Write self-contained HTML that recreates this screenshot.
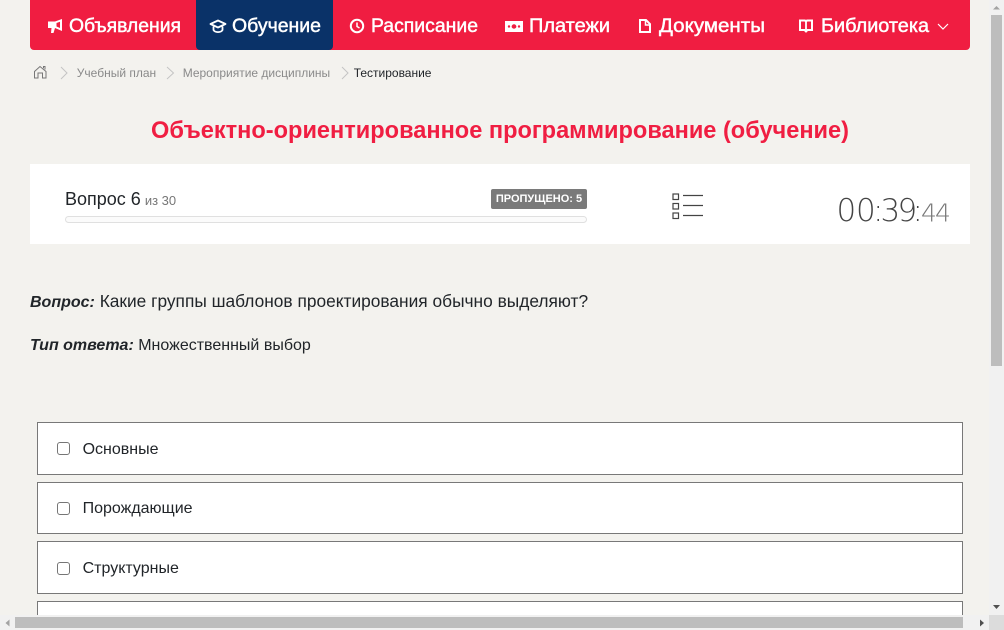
<!DOCTYPE html>
<html lang="ru"><head><meta charset="utf-8"><title>Тестирование</title>
<style>
html,body{margin:0;padding:0;width:1004px;height:630px;overflow:hidden;background:#f3f2ee}
#p{position:relative;width:1004px;height:630px;overflow:hidden;background:#f3f2ee;font-family:"Liberation Sans",sans-serif;color:#212529}
.a{position:absolute;white-space:nowrap}
svg{position:absolute;overflow:visible}
.opt{position:absolute;left:37px;width:924px;background:#fff;border:1px solid #787878}
.opt i{position:absolute;left:19px;width:11px;height:11px;border:1px solid #767676;border-radius:3px;background:#fff}
.opt span{position:absolute;left:44.600px;font-size:16px;line-height:20px;white-space:nowrap}
</style></head><body><div id="p">
<div class="a" style="left:30px;top:0;width:940px;height:50px;background:#f01d41;border-radius:0 0 4px 4px"></div>
<div class="a" style="left:196px;top:0;width:137px;height:50px;background:#0a3268;border-radius:0 0 4px 4px"></div>

<svg style="left:0;top:0" width="1004" height="160">
<g font-family="Liberation Sans" font-size="19.500" fill="#fff" stroke="#fff" stroke-width="0.450">
<text x="69" y="32" textLength="112" lengthAdjust="spacingAndGlyphs">Объявления</text>
<text x="232" y="32" textLength="89" lengthAdjust="spacingAndGlyphs">Обучение</text>
<text x="371" y="32" textLength="107" lengthAdjust="spacingAndGlyphs">Расписание</text>
<text x="529" y="32" textLength="81" lengthAdjust="spacingAndGlyphs">Платежи</text>
<text x="659" y="32" textLength="106" lengthAdjust="spacingAndGlyphs">Документы</text>
<text x="821" y="32" textLength="108" lengthAdjust="spacingAndGlyphs">Библиотека</text>
</g>
<text x="151" y="138" font-family="Liberation Sans" font-weight="bold" font-size="24" fill="#f01e42" textLength="698" lengthAdjust="spacingAndGlyphs">Объектно-ориентированное программирование (обучение)</text>
<!-- megaphone -->
<path d="M48 21.500 L55 21.500 L62 19 V31 L55 28 L53.500 33 H51 L51.500 28 H48 Z" fill="#fff"/>
<path d="M56.500 23 L60 21.800 V28 L56.500 26.500 Z" fill="#f01d41"/>
<!-- graduation cap -->
<path d="M210.500 24 L218 20.500 L225.500 24 L218 27.500 Z" fill="none" stroke="#fff" stroke-width="1.800" stroke-linejoin="round"/>
<path d="M213.500 26.500 V30 C215 32.800 221 32.800 222.500 30 V26.500" fill="none" stroke="#fff" stroke-width="1.800"/>
<!-- clock -->
<circle cx="357" cy="26" r="6.200" fill="none" stroke="#fff" stroke-width="2"/>
<path d="M357 22.500 V26.500 L359.500 28" fill="none" stroke="#fff" stroke-width="1.500"/>
<!-- money -->
<rect x="505" y="21" width="18" height="11" fill="#fff"/>
<ellipse cx="514" cy="26.500" rx="2.400" ry="2.200" fill="#f01d41"/><circle cx="509" cy="26.500" r="1.200" fill="#f01d41"/><circle cx="519" cy="26.500" r="1.200" fill="#f01d41"/>
<!-- file -->
<path d="M640 20 H646 L650 24 V32 H640 Z" fill="none" stroke="#fff" stroke-width="2"/>
<path d="M645.500 20 V25 H650" fill="none" stroke="#fff" stroke-width="1.500"/>
<!-- book -->
<path d="M800 20.500 H805 L806 21.500 L807 20.500 H812 V30 H807.500 L806 31.500 L804.500 30 H800 Z" fill="none" stroke="#fff" stroke-width="2"/>
<path d="M806 21.500 V31" stroke="#fff" stroke-width="1.800"/>
<!-- chevron -->
<path d="M938 24 L943 29 L948 24" fill="none" stroke="#fff" stroke-width="1.200"/>
<!-- home -->
<path d="M34.500 78 V71.500 L40 66.500 L46 71.500 V78 H42.500 V73 H38 V78 Z M43.500 68.200 V66.500 H45 V69.500" fill="none" stroke="#777" stroke-width="1"/>
<g fill="none" stroke="#c4c4c4" stroke-width="1">
<path d="M61 67 L67 73 L61 79"/><path d="M167 67 L173.500 73 L167 79"/><path d="M342 67 L348 73 L342 79"/>
</g>
</svg>

<div class="a" style="left:76.800px;top:65px;font-size:12px;line-height:16px;color:#8a8a8a">Учебный план</div>
<div class="a" style="left:182.700px;top:65px;font-size:12px;line-height:16px;color:#8a8a8a">Мероприятие дисциплины</div>
<div class="a" style="left:353.700px;top:65px;font-size:12px;line-height:16px;color:#212529">Тестирование</div>

<div class="a" style="left:30px;top:164px;width:940px;height:80px;background:#fff"></div>
<div class="a" style="left:65px;top:188px;font-size:18px;line-height:22px">Вопрос 6 <span style="font-size:13px;color:#777;margin-left:-1px">из 30</span></div>
<div class="a" style="left:491px;top:189px;width:96px;height:20px;background:#7a7a7a;border-radius:2px;color:#fff;font-size:11px;font-weight:bold;line-height:20px;text-align:center">ПРОПУЩЕНО: 5</div>
<div class="a" style="left:65px;top:216px;width:520px;height:5px;border:1px solid #e0e0e0;border-radius:4px;background:#fbfbfb"></div>

<svg style="left:0;top:164px" width="1004" height="80">
<g fill="none" stroke="#444" stroke-width="1.200">
<rect x="673" y="30" width="5.500" height="5.500"/><rect x="673" y="39.500" width="5.500" height="5.500"/><rect x="673" y="49" width="5.500" height="5.500"/>
<path d="M683 31.500 H703 M683 41.500 H703 M683 51.500 H703"/>
</g>
<text x="836.500 856 873 880.500 897.500 912.500" y="57" font-family="DejaVu Sans" font-weight="200" font-size="31" fill="#444">00:39:</text>
<text x="921 935" y="57.500" font-family="DejaVu Sans" font-weight="200" font-size="25" fill="#777">44</text>
</svg>

<div class="a" style="left:30px;top:291px;font-size:17.330px;line-height:21px"><b style="font-size:16px"><i>Вопрос:</i></b> Какие группы шаблонов проектирования обычно выделяют?</div>
<div class="a" style="left:30px;top:335px;font-size:16px;line-height:21px"><b><i>Тип ответа:</i></b> Множественный выбор</div>

<div class="opt" style="top:422px;height:51px"><i style="top:19px"></i><span style="top:17px">Основные</span></div>
<div class="opt" style="top:482px;height:50px"><i style="top:19px"></i><span style="top:16px">Порождающие</span></div>
<div class="opt" style="top:541px;height:51px"><i style="top:20px"></i><span style="top:17px">Структурные</span></div>
<div class="opt" style="top:601px;height:20px"></div>

<!-- scrollbars -->
<div class="a" style="left:989px;top:0;width:15px;height:630px;background:#f1f1f1"></div>
<div class="a" style="left:991px;top:15px;width:11px;height:351px;background:#bdbdbd"></div>
<div class="a" style="left:0;top:615px;width:989px;height:15px;background:#f1f1f1"></div>
<div class="a" style="left:15px;top:617px;width:948px;height:11px;background:#bdbdbd"></div>
<div class="a" style="left:989px;top:615px;width:15px;height:15px;background:#dcdcdc"></div>
<svg style="left:0;top:0" width="1004" height="630">
<path d="M993 9.500 L996.500 6 L1000 9.500 Z" fill="#a3a3a3"/>
<path d="M993 605 H1000 L996.500 609 Z" fill="#505050"/>
<path d="M9.500 619.500 V626.500 L5.500 623 Z" fill="#a3a3a3"/>
<path d="M980 619.500 V626.500 L984 623 Z" fill="#505050"/>
</svg>
</div></body></html>
